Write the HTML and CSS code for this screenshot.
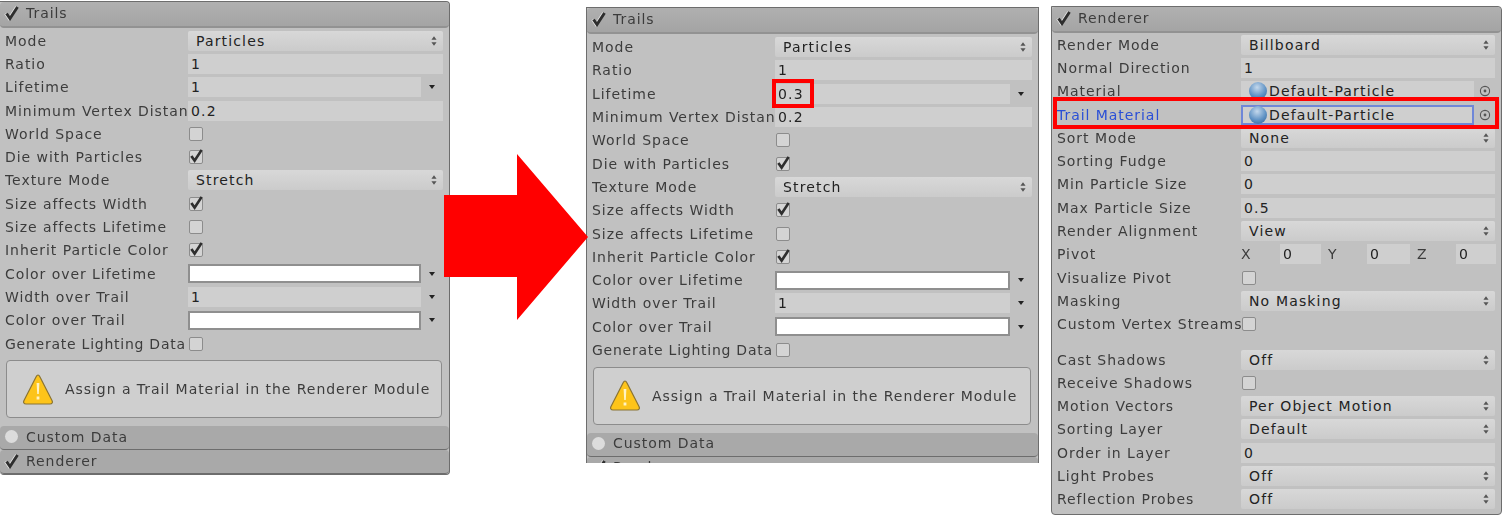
FILE: index.html
```html
<!DOCTYPE html>
<html lang="en">
<head>
    <meta charset="UTF-8">
    <meta name="viewport" content="width=device-width, initial-scale=1.0">
    <title>Trails and Renderer modules</title>
    <link rel="stylesheet" href="styles.css">
</head>
<body>

<svg width="0" height="0" class="defs">
    <defs>
        <symbol id="tick" viewBox="0 0 16 16">
            <path d="M2.5 8.5 L6 13.5 L13.5 2" fill="none" stroke="#2e2e2e" stroke-width="2.9"/>
        </symbol>
        <symbol id="updown" viewBox="0 0 7 12">
            <path d="M3.5 0.5 L6.5 4.5 H0.5 Z M3.5 11.5 L6.5 7.5 H0.5 Z" fill="#555"/>
        </symbol>
        <symbol id="warn" viewBox="0 0 30 31">
            <path d="M15 1 C16 1 16.5 2 17 3 L29 26.5 C30 28.5 29 30 27 30 H3 C1 30 0 28.5 1 26.5 L13 3 C13.5 2 14 1 15 1 Z" fill="#fdc41a" stroke="#8a7434" stroke-width="1.2"/>
            <path d="M13.6 9 H16.4 L15.8 20 H14.2 Z M13.6 22.5 H16.4 V25.5 H13.6 Z" fill="#fff3c4"/>
        </symbol>
        <symbol id="target" viewBox="0 0 12 12">
            <circle cx="6" cy="6" r="4.6" fill="none" stroke="#555" stroke-width="1.1"/>
            <circle cx="6" cy="6" r="1.4" fill="#555"/>
        </symbol>
    </defs>
</svg>

<div class="panel panel-a">
    <div class="module-head"><span class="head-check"><svg><use href="#tick"/></svg></span>Trails</div>
    <div class="module-body">
        <div class="row"><span class="label">Mode</span><div class="field drop">Particles<svg class="updown"><use href="#updown"/></svg></div></div>
        <div class="row"><span class="label">Ratio</span><div class="field">1</div></div>
        <div class="row"><span class="label">Lifetime</span><div class="with-menu"><div class="field">1</div><span class="menu-tri"></span></div></div>
        <div class="row"><span class="label">Minimum Vertex Distan</span><div class="field">0.2</div></div>
        <div class="row"><span class="label">World Space</span><span class="check"></span></div>
        <div class="row"><span class="label">Die with Particles</span><span class="check"><svg><use href="#tick"/></svg></span></div>
        <div class="row"><span class="label">Texture Mode</span><div class="field drop">Stretch<svg class="updown"><use href="#updown"/></svg></div></div>
        <div class="row"><span class="label">Size affects Width</span><span class="check"><svg><use href="#tick"/></svg></span></div>
        <div class="row"><span class="label">Size affects Lifetime</span><span class="check"></span></div>
        <div class="row"><span class="label">Inherit Particle Color</span><span class="check"><svg><use href="#tick"/></svg></span></div>
        <div class="row"><span class="label">Color over Lifetime</span><div class="with-menu"><div class="swatch"></div><span class="menu-tri"></span></div></div>
        <div class="row"><span class="label">Width over Trail</span><div class="with-menu"><div class="field">1</div><span class="menu-tri"></span></div></div>
        <div class="row"><span class="label">Color over Trail</span><div class="with-menu"><div class="swatch"></div><span class="menu-tri"></span></div></div>
        <div class="row"><span class="label snug">Generate Lighting Data</span><span class="check"></span></div>
        <div class="helpbox"><svg class="warn"><use href="#warn"/></svg>Assign a Trail Material in the Renderer Module</div>
    </div>
    <div class="module-head closed"><span class="head-dot"></span>Custom Data</div>
    <div class="module-head closed"><span class="head-check"><svg><use href="#tick"/></svg></span>Renderer</div>
</div>

<div class="panel panel-b">
    <div class="module-head"><span class="head-check"><svg><use href="#tick"/></svg></span>Trails</div>
    <div class="module-body">
        <div class="row"><span class="label">Mode</span><div class="field drop">Particles<svg class="updown"><use href="#updown"/></svg></div></div>
        <div class="row"><span class="label">Ratio</span><div class="field">1</div></div>
        <div class="row"><span class="label">Lifetime</span><div class="with-menu"><div class="field">0.3<span class="mark-value"></span></div><span class="menu-tri"></span></div></div>
        <div class="row"><span class="label">Minimum Vertex Distan</span><div class="field">0.2</div></div>
        <div class="row"><span class="label">World Space</span><span class="check"></span></div>
        <div class="row"><span class="label">Die with Particles</span><span class="check"><svg><use href="#tick"/></svg></span></div>
        <div class="row"><span class="label">Texture Mode</span><div class="field drop">Stretch<svg class="updown"><use href="#updown"/></svg></div></div>
        <div class="row"><span class="label">Size affects Width</span><span class="check"><svg><use href="#tick"/></svg></span></div>
        <div class="row"><span class="label">Size affects Lifetime</span><span class="check"></span></div>
        <div class="row"><span class="label">Inherit Particle Color</span><span class="check"><svg><use href="#tick"/></svg></span></div>
        <div class="row"><span class="label">Color over Lifetime</span><div class="with-menu"><div class="swatch"></div><span class="menu-tri"></span></div></div>
        <div class="row"><span class="label">Width over Trail</span><div class="with-menu"><div class="field">1</div><span class="menu-tri"></span></div></div>
        <div class="row"><span class="label">Color over Trail</span><div class="with-menu"><div class="swatch"></div><span class="menu-tri"></span></div></div>
        <div class="row"><span class="label snug">Generate Lighting Data</span><span class="check"></span></div>
        <div class="helpbox"><svg class="warn"><use href="#warn"/></svg>Assign a Trail Material in the Renderer Module</div>
    </div>
    <div class="module-head closed"><span class="head-dot"></span>Custom Data</div>
    <div class="module-head closed"><span class="head-check"><svg><use href="#tick"/></svg></span>Renderer</div>
</div>

<div class="panel panel-c">
    <div class="module-head"><span class="head-check"><svg><use href="#tick"/></svg></span>Renderer</div>
    <div class="module-body">
        <div class="row"><span class="label">Render Mode</span><div class="field drop">Billboard<svg class="updown"><use href="#updown"/></svg></div></div>
        <div class="row"><span class="label">Normal Direction</span><div class="field">1</div></div>
        <div class="row"><span class="label">Material</span><div class="with-target"><div class="field object"><span class="sphere"></span>Default-Particle</div><svg class="target"><use href="#target"/></svg></div></div>
        <div class="row picked"><span class="label">Trail Material</span><div class="with-target"><div class="field object focused"><span class="sphere"></span>Default-Particle</div><svg class="target"><use href="#target"/></svg></div><span class="mark-row"></span></div>
        <div class="row"><span class="label">Sort Mode</span><div class="field drop">None<svg class="updown"><use href="#updown"/></svg></div></div>
        <div class="row"><span class="label">Sorting Fudge</span><div class="field">0</div></div>
        <div class="row"><span class="label">Min Particle Size</span><div class="field">0</div></div>
        <div class="row"><span class="label">Max Particle Size</span><div class="field">0.5</div></div>
        <div class="row"><span class="label">Render Alignment</span><div class="field drop">View<svg class="updown"><use href="#updown"/></svg></div></div>
        <div class="row"><span class="label">Pivot</span>
            <div class="xyz">
                <span>X</span><div class="field">0</div>
                <span>Y</span><div class="field">0</div>
                <span>Z</span><div class="field">0</div>
            </div>
        </div>
        <div class="row"><span class="label">Visualize Pivot</span><span class="check"></span></div>
        <div class="row"><span class="label">Masking</span><div class="field drop">No Masking<svg class="updown"><use href="#updown"/></svg></div></div>
        <div class="row"><span class="label">Custom Vertex Streams</span><span class="check"></span></div>
        <div class="spacer"></div>
        <div class="row"><span class="label">Cast Shadows</span><div class="field drop">Off<svg class="updown"><use href="#updown"/></svg></div></div>
        <div class="row"><span class="label">Receive Shadows</span><span class="check"></span></div>
        <div class="row"><span class="label">Motion Vectors</span><div class="field drop">Per Object Motion<svg class="updown"><use href="#updown"/></svg></div></div>
        <div class="row"><span class="label">Sorting Layer</span><div class="field drop">Default<svg class="updown"><use href="#updown"/></svg></div></div>
        <div class="row"><span class="label">Order in Layer</span><div class="field">0</div></div>
        <div class="row"><span class="label">Light Probes</span><div class="field drop">Off<svg class="updown"><use href="#updown"/></svg></div></div>
        <div class="row"><span class="label">Reflection Probes</span><div class="field drop">Off<svg class="updown"><use href="#updown"/></svg></div></div>
    </div>
</div>

<svg class="arrow" viewBox="0 0 144 166">
    <polygon points="0,41 73,41 73,0 144,83 73,166 73,123 0,123" fill="#ff0000"/>
</svg>

</body>
</html>
```

FILE: styles.css
```css
body {
    font-family: 'DejaVu Sans', sans-serif;
    font-size: 14px;
    letter-spacing: 0.95px;
    color: #3c3c3c;
    background-color: #ffffff;
    margin: 0;
    padding: 0;
    display: flex;
    align-items: flex-start;
    height: 517px;
    overflow: hidden;
    position: relative;
}
.defs {
    position: absolute;
}
.panel {
    background-color: #c1c1c1;
    border: 1px solid #6d6d6d;
    border-radius: 0 4px 4px 4px;
    box-sizing: border-box;
    overflow: hidden;
    filter: blur(0.35px);
    flex: none;
}
.panel-a {
    width: 450px;
    margin-top: 1px;
    border-left: 0;
    --label-col: 188px;
}
.panel-b {
    width: 453px;
    height: 456px;
    margin-top: 7px;
    margin-left: 136px;
    border-bottom: 0;
    border-radius: 0;
    --label-col: 188px;
}
.panel-c {
    width: 451px;
    height: 509px;
    margin-top: 6px;
    margin-left: 12px;
    --label-col: 189px;
}
.module-head {
    height: 22px;
    display: flex;
    align-items: center;
    gap: 6px;
    padding: 0 0 2px 4px;
    background: linear-gradient(#b0b0b0, #a4a4a4);
    border-bottom: 2px solid #929292;
    border-radius: 4px;
}
.module-head.closed {
    height: 21px;
    background: #a9a9a9;
    border-bottom: 1px solid #6d6d6d;
}
.head-check {
    width: 16px;
    height: 16px;
    flex: none;
}
.head-check svg {
    width: 16px;
    height: 16px;
    display: block;
    filter: drop-shadow(-1px 0 0 #e4e4e4);
}
.head-dot {
    width: 13px;
    height: 13px;
    margin: 0 2px 0 1px;
    border-radius: 50%;
    background-color: #dcdcdc;
    flex: none;
}
.module-body {
    padding: 1px 6px 8px 5px;
}
.panel-b .module-body {
    padding-top: 1.5px;
}
.panel-c .module-body {
    padding-top: 0;
}
.row {
    height: 23.3px;
    display: grid;
    grid-template-columns: calc(var(--label-col) - 5px) 1fr;
    align-items: center;
    position: relative;
}
.label {
    overflow: hidden;
    white-space: nowrap;
}
.label.snug {
    letter-spacing: 0.75px;
}
.picked .label {
    color: #2a4fd6;
}
.field {
    height: 20px;
    line-height: 20px;
    padding-left: 3px;
    background-color: #cfcfcf;
    color: #222222;
    letter-spacing: 1.15px;
    position: relative;
    white-space: nowrap;
}
.drop {
    padding-left: 8px;
    background: linear-gradient(#d8d8d8, #cbcbcb);
    border-radius: 2px;
}
.updown {
    position: absolute;
    right: 6px;
    top: 4px;
    width: 6px;
    height: 12px;
}
.with-menu {
    display: grid;
    grid-template-columns: 1fr 22px;
    align-items: center;
}
.menu-tri {
    justify-self: center;
    width: 0;
    height: 0;
    border-left: 3px solid transparent;
    border-right: 3px solid transparent;
    border-top: 4px solid #222222;
}
.swatch {
    height: 15px;
    background-color: #ffffff;
    border: 2px solid #8f8f8f;
}
.check {
    width: 12px;
    height: 12px;
    margin-left: 1px;
    background-color: #d4d4d4;
    border: 1px solid #8c8c8c;
    border-radius: 2px;
    position: relative;
}
.check svg {
    position: absolute;
    left: -1px;
    top: -4px;
    width: 15px;
    height: 17px;
}
.helpbox {
    height: 56px;
    margin: 5px 1px 0;
    display: flex;
    align-items: center;
    gap: 12px;
    padding-left: 16px;
    background-color: #cfcfcf;
    border: 1px solid #8c8c8c;
    border-radius: 4px;
    white-space: nowrap;
}
.warn {
    width: 30px;
    height: 31px;
    flex: none;
}
.with-target {
    display: grid;
    grid-template-columns: 1fr 21px;
    align-items: center;
}
.object {
    display: flex;
    align-items: center;
    gap: 2px;
    padding-left: 8px;
    height: 20px;
}
.focused {
    box-sizing: border-box;
    border: 2px solid #6f87d8;
    padding-left: 6px;
    line-height: 16px;
}
.sphere {
    width: 18px;
    height: 18px;
    border-radius: 50%;
    background: radial-gradient(circle at 45% 30%, #c4d8ec, #5f92c4 55%, #2f5f90);
    flex: none;
}
.target {
    justify-self: center;
    width: 12px;
    height: 12px;
}
.xyz {
    display: grid;
    grid-template-columns: 39px 41px 46px 43px 46px 40px;
    align-items: center;
}
.xyz span:not(:first-child) {
    padding-left: 7px;
}
.spacer {
    height: 12px;
}
.mark-value {
    position: absolute;
    z-index: 3;
    left: -3px;
    top: -5px;
    box-sizing: border-box;
    width: 42px;
    height: 29px;
    border: 4px solid #ff0000;
}
.mark-row {
    position: absolute;
    z-index: 3;
    left: -4px;
    right: -4px;
    top: -6px;
    bottom: -3px;
    border: 4px solid #ff0000;
}
.arrow {
    position: absolute;
    left: 444px;
    top: 154px;
    width: 144px;
    height: 166px;
}
```
